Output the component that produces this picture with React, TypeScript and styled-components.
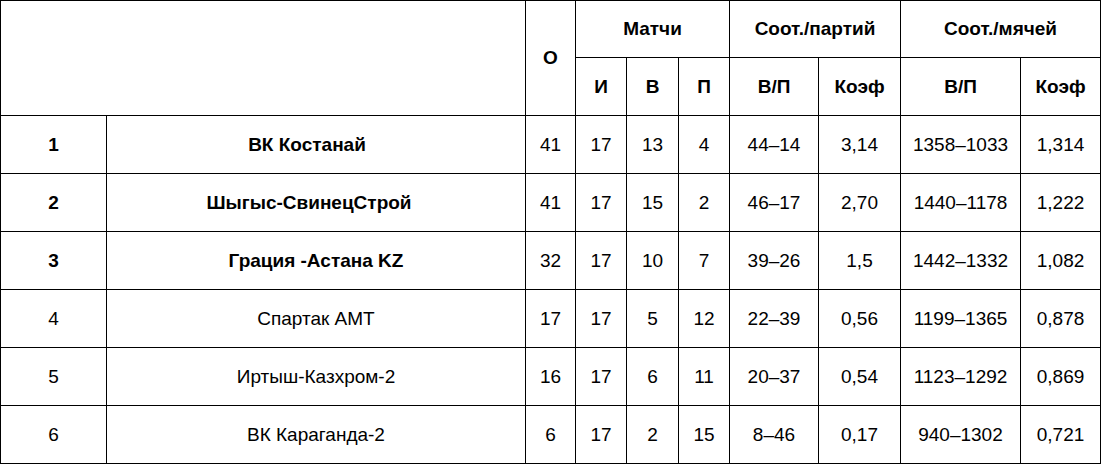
import React from "react";
import styled, { createGlobalStyle } from "styled-components";

const Global = createGlobalStyle`
  html, body { margin: 0; padding: 0; background: #fff; }
  body { font-family: "Liberation Sans", Arial, sans-serif; }
`;

const Grid = styled.div`
  display: inline-grid;
  grid-template-columns: 105px 418px 49px 50px 51px 50px 88px 81px 119px 79px;
  grid-template-rows: 56px 57px repeat(6, 57px);
  gap: 1px;
  padding: 1px;
  background: #000;
`;

const Cell = styled.div<{ $bold?: boolean; $col?: string; $row?: string; $shift?: number }>`
  background: #fff;
  display: flex;
  align-items: center;
  justify-content: center;
  font-size: 19px;
  color: #000;
  font-weight: ${(p) => (p.$bold ? 700 : 400)};
  grid-column: ${(p) => p.$col ?? "auto"};
  grid-row: ${(p) => p.$row ?? "auto"};
  padding-right: ${(p) => p.$shift ?? 0}px;
  white-space: nowrap;
`;

type Row = {
  pos: string;
  team: string;
  bold: boolean;
  shift?: number;
  vals: string[];
};

const rows: Row[] = [
  { pos: "1", team: "ВК Костанай", bold: true, shift: 18, vals: ["41", "17", "13", "4", "44–14", "3,14", "1358–1033", "1,314"] },
  { pos: "2", team: "Шыгыс-СвинецСтрой", bold: true, shift: 14, vals: ["41", "17", "15", "2", "46–17", "2,70", "1440–1178", "1,222"] },
  { pos: "3", team: "Грация -Астана KZ", bold: true, vals: ["32", "17", "10", "7", "39–26", "1,5", "1442–1332", "1,082"] },
  { pos: "4", team: "Спартак АМТ", bold: false, vals: ["17", "17", "5", "12", "22–39", "0,56", "1199–1365", "0,878"] },
  { pos: "5", team: "Иртыш-Казхром-2", bold: false, vals: ["16", "17", "6", "11", "20–37", "0,54", "1123–1292", "0,869"] },
  { pos: "6", team: "ВК Караганда-2", bold: false, vals: ["6", "17", "2", "15", "8–46", "0,17", "940–1302", "0,721"] },
];

export default function App() {
  return (
    <>
      <Global />
      <Grid>
        <Cell $col="1 / 3" $row="1 / 3" />
        <Cell $bold $col="3" $row="1 / 3">О</Cell>
        <Cell $bold $col="4 / 7" $row="1">Матчи</Cell>
        <Cell $bold $col="7 / 9" $row="1">Соот./партий</Cell>
        <Cell $bold $col="9 / 11" $row="1">Соот./мячей</Cell>
        <Cell $bold $col="4" $row="2">И</Cell>
        <Cell $bold $col="5" $row="2">В</Cell>
        <Cell $bold $col="6" $row="2">П</Cell>
        <Cell $bold $col="7" $row="2">В/П</Cell>
        <Cell $bold $col="8" $row="2">Коэф</Cell>
        <Cell $bold $col="9" $row="2">В/П</Cell>
        <Cell $bold $col="10" $row="2">Коэф</Cell>
        {rows.map((r) => (
          <React.Fragment key={r.pos}>
            <Cell $bold={r.bold}>{r.pos}</Cell>
            <Cell $bold={r.bold} $shift={r.shift}>{r.team}</Cell>
            {r.vals.map((v, i) => (
              <Cell key={i}>{v}</Cell>
            ))}
          </React.Fragment>
        ))}
      </Grid>
    </>
  );
}
